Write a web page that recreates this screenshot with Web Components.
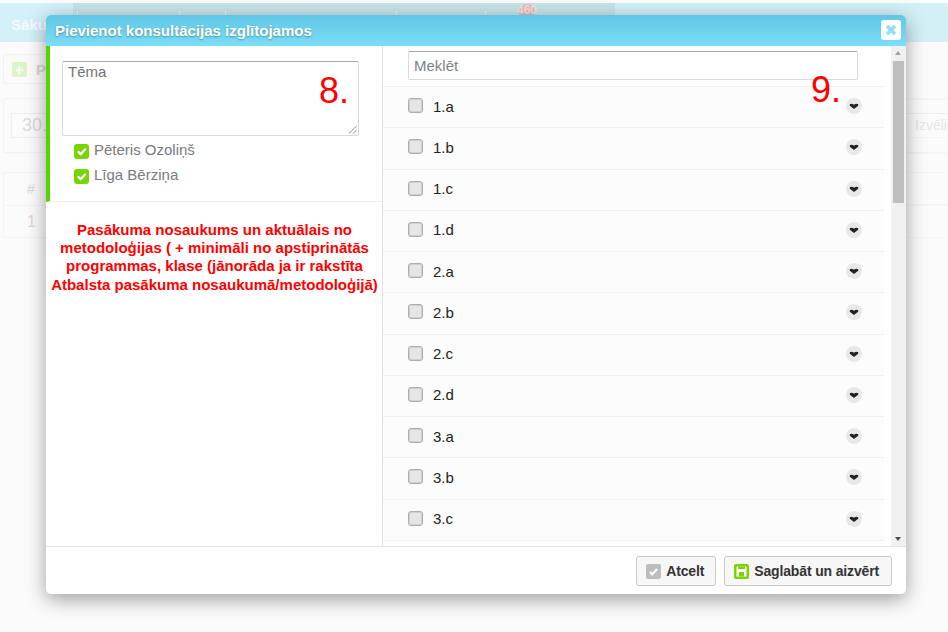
<!DOCTYPE html>
<html><head><meta charset="utf-8">
<style>
html,body{margin:0;padding:0;height:100%;overflow:hidden;background:#fbfbfb;font-family:"Liberation Sans",Arial,sans-serif}
</style></head><body>
<page-backdrop></page-backdrop>
<consult-modal title-text="Pievienot konsultācijas izglītojamos"></consult-modal>
<script>
function def(name,html,init){
  customElements.define(name,class extends HTMLElement{
    constructor(){super();this.attachShadow({mode:'open'}).innerHTML=html;}
    connectedCallback(){if(init)init.call(this,this.shadowRoot);}
  });
}
def('page-backdrop',`<style>
:host{display:block;width:948px;height:632px;position:relative;color:#d8d8d8;font:14px "Liberation Sans",Arial,sans-serif;overflow:hidden}
.top{margin-top:3px;height:39px;background:#d3f0f7;display:flex;position:relative}
.top .a{width:615px;background:linear-gradient(#c8e3e9,#cdeaf1);display:flex}
.tab{width:73px;padding:13px 0 0 11px;box-sizing:border-box;font-weight:bold;color:#f4fbfd;font-size:15px;background:#d4f0f8}
.tick{position:absolute;top:8px;width:1px;height:7px;background:#e8f4f6}
.blob{position:absolute;left:519px;top:1px;width:16px;height:16px;border-radius:50%;background:#e6b8b4}
.n{position:absolute;left:517px;top:0;font:bold 12px "Liberation Sans",Arial,sans-serif;color:#efe6e4}
.btn{margin:12px 0 0 3px;width:60px;height:30px;box-sizing:border-box;border:1px solid #f1f1f1;border-radius:3px;display:flex;align-items:center;gap:9px;padding-left:8px;font-weight:bold;font-size:15px}
.plus{flex:none;width:15px;height:15px;border-radius:2px;background:#dcf4c8;color:#fff;font:bold 15px/15px "Liberation Sans",Arial,sans-serif;text-align:center}
.panel{margin:14px 0 0 3px;height:55px;box-sizing:border-box;border:1px solid #f3f3f3;border-right:0;border-radius:3px;padding:14px 0 0 7px;font-size:18px;color:#dcdcdc}
.panel span{display:block;width:60px;height:25px;border:1px solid #efefef;padding-left:10px;line-height:23px;box-sizing:border-box}
.table{margin:19px 0 0 3px;height:66px;box-sizing:border-box;border:1px solid #f3f3f3;border-right:0;font-size:14px;text-align:left;color:#d8d8d8}
.table div{height:32px;padding-left:23px;line-height:32px;box-sizing:border-box}
.table div+div{border-top:1px solid #f3f3f3;font-size:16px}
.right{position:absolute;left:906px;top:99px;width:42px;height:139px;}
.line{position:absolute;left:0;right:0;height:1px;background:#f5f5f5}
.izv{position:absolute;left:9px;top:18px;color:#e6e6e6;font-size:14px}
</style>
<div class="top"><div class="a"><div class="tab">Sāku</div></div>
<i class="tick" style="left:77px"></i><i class="tick" style="left:179px"></i><i class="tick" style="left:225px"></i><i class="tick" style="left:396px"></i><i class="tick" style="left:485px"></i><i class="blob"></i><span class="n">460</span></div>
<div class="btn"><span class="plus">+</span><span>P</span></div>
<div class="panel"><span>30.</span></div>
<div class="table"><div>#</div><div>1</div></div>
<div class="right"><i class="line" style="top:0"></i><i class="line" style="top:14px;background:#eee"></i><i class="line" style="top:38px"></i><i class="line" style="top:54px"></i><i class="line" style="top:73px"></i><i class="line" style="top:105px"></i><i class="line" style="top:138px"></i><span class="izv">Izvēlie</span></div>
`);
def('check-box',`<style>
:host{display:inline-block;width:15px;height:15px;box-sizing:border-box;border-radius:3px;flex:none}
:host(:not([on])){background:#e6e6e6;border:1px solid #adadad;box-shadow:inset 0 0 0 1px #d0d0d0;margin-top:-1px}
:host([on]){background:#77d600}
svg{display:block;width:15px;height:15px}
</style><svg viewBox="0 0 15 15"><path id="p" d="" fill="none" stroke="#fff" stroke-width="2.4" stroke-linecap="round" stroke-linejoin="round"/></svg>`,function(s){
  if(this.hasAttribute('on')) s.getElementById('p').setAttribute('d','M4.5 8l2.2 2.2L11 5.5');
});
def('list-row',`<style>
:host{display:flex;align-items:center;height:41.25px;box-sizing:border-box;border-bottom:1px solid #f1f1f1;padding:0 22px 2px 25px;background:#fcfcfc;color:#222;font-size:15px}
span{margin-left:10px;flex:1}
.c{width:16px;height:16px;border-radius:50%;background:#e8e8e8;display:block}
</style><check-box></check-box><span><slot></slot></span>
<svg class="c" viewBox="0 0 16 16"><path d="M3.8 6.3C4.8 5.5 6.6 5.5 8 6.7 9.4 5.5 11.2 5.5 12.2 6.3L12.2 7.8 8 11 3.8 7.8Z" fill="#222"/></svg>`);
def('person-check',`<style>
:host{display:flex;align-items:center;height:25px;padding-left:12px;color:#777b80;font-size:15px}
span{margin-left:5px;position:relative;top:-2px}
</style><check-box on></check-box><span><slot></slot></span>`);
def('action-button',`<style>
:host{display:inline-flex;align-items:center;height:30px;box-sizing:border-box;border:1px solid #c8c8c8;border-radius:3px;background:#f7f7f7;color:#333;font:bold 14px "Liberation Sans",Arial,sans-serif;letter-spacing:-.15px;padding:0 12px 0 9px;gap:5px}
</style><slot name="icon"></slot><slot></slot>`);
def('scroll-bar',`<style>
:host{display:block;width:15px;background:#f1f1f1;position:relative;flex:none}
.thumb{position:absolute;left:2px;width:11px;top:15px;height:142px;background:#bebebe}
.u,.d{position:absolute;left:4px;width:0;height:0;border:3.5px solid transparent}
.u{top:5px;border-top:0;border-bottom:4px solid #a3a3a3}
.d{bottom:5px;border-bottom:0;border-top:4px solid #505050}
</style><i class="u"></i><i class="thumb"></i><i class="d"></i>`);
def('consult-modal',`<style>
:host{position:absolute;left:46px;top:15px;width:860px;height:579px;background:#fff;border-radius:5px;box-shadow:0 5px 20px rgba(0,0,0,.38);display:flex;flex-direction:column;overflow:hidden;font-family:"Liberation Sans",Arial,sans-serif}
header{height:31px;flex:none;background:linear-gradient(#5fc6e4,#7cdef8);display:flex;align-items:center;justify-content:space-between;padding:0 5px 0 9px;color:#fff;font-weight:bold;font-size:15px;text-shadow:0 1px 2px rgba(0,0,0,.35)}
.x{width:20px;height:20px;margin-top:-1px;background:#fff;border-radius:3px;display:flex;align-items:center;justify-content:center}
main{flex:1;display:flex;min-height:0}
.left{width:337px;box-sizing:border-box;border-right:1px solid #e2e2e2;flex:none}
.top{border-left:4px solid #55d400;height:156px;box-sizing:border-box;border-bottom:1px solid #f0f0f0;padding:15px 23px 0 12px}
.ta{height:75px;box-sizing:border-box;border:1px solid #d5dbe2;border-top:1px solid #a9a9a9;border-radius:2px;color:#737373;font-size:15px;padding:1px 5px;position:relative}
.ta svg{position:absolute;right:1px;bottom:1px}
.people{padding-top:3px}
.note{margin:18.7px 0 0;padding:0 2px 0 3px;text-align:center;color:#f00;font-weight:bold;font-size:15px;line-height:18.3px}
.right{flex:1;display:flex;min-width:0}
.col{flex:1;min-width:0;overflow:hidden;background:#fff;padding-right:7px}
.search{height:41px;box-sizing:border-box;padding:5px 26px 0 25px;background:#fff;border-bottom:1px solid #f1f1f1}
.search div{height:29px;box-sizing:border-box;border:1px solid #d5dbe2;border-top:1px solid #a9a9a9;border-radius:2px;color:#7d8288;font-size:15px;line-height:27px;padding-left:5px}
footer{height:48px;flex:none;border-top:1px solid #e3e3e3;box-sizing:border-box;display:flex;justify-content:flex-end;align-items:center;gap:8px;padding:1px 14px 0 0}
.ico{width:15px;height:15px;display:block}
.mark{position:absolute;color:#f00;font-size:36px;line-height:40px}
</style>
<header><span></span><span class="x"><svg width="12" height="12" viewBox="0 0 12 12"><path d="M2 2l8 8M10 2l-8 8" stroke="#8fdcf3" stroke-width="3.2"/></svg></span></header>
<main>
<div class="left">
<div class="top">
<div class="ta">Tēma<svg width="9" height="9" viewBox="0 0 9 9"><path d="M8.5 1L1 8.5M8.5 5L5 8.5" stroke="#555" stroke-width="1" stroke-dasharray="1.5 .7"/></svg></div>
<div class="people"><person-check>Pēteris Ozoliņš</person-check><person-check>Līga Bērziņa</person-check></div>
</div>
<p class="note">Pasākuma nosaukums un aktuālais no metodoloģijas ( + minimāli no apstiprinātās programmas, klase (jānorāda ja ir rakstīta Atbalsta pasākuma nosaukumā/metodoloģijā)</p>
</div>
<div class="right"><div class="col">
<div class="search"><div>Meklēt</div></div>
<list-row>1.a</list-row><list-row>1.b</list-row><list-row>1.c</list-row><list-row>1.d</list-row>
<list-row>2.a</list-row><list-row>2.b</list-row><list-row>2.c</list-row><list-row>2.d</list-row>
<list-row>3.a</list-row><list-row>3.b</list-row><list-row>3.c</list-row>
</div><scroll-bar></scroll-bar></div>
</main>
<footer>
<action-button style="padding-right:11px"><svg slot="icon" class="ico" width="15" height="15" viewBox="0 0 15 15" style="display:block"><rect width="15" height="15" rx="2" fill="#bdbdbd"/><path d="M4 8l2.3 2.3L11 5" fill="none" stroke="#fff" stroke-width="2.2"/></svg>Atcelt</action-button>
<action-button><svg slot="icon" class="ico" width="15" height="15" viewBox="0 0 15 15" style="display:block"><rect width="15" height="15" rx="2" fill="#77d600"/><rect x="2.5" y="2.5" width="10" height="10" fill="#fff"/><rect x="4" y="2.5" width="7" height="2.5" fill="#77d600"/><rect x="5" y="8" width="5" height="4.5" fill="#77d600"/></svg>Saglabāt un aizvērt</action-button>
</footer>
<span class="mark" style="left:273px;top:56px">8.</span>
<span class="mark" style="left:765px;top:55px">9.</span>
`,function(s){s.querySelector('header span').textContent=this.getAttribute('title-text');});
</script>
</body></html>
